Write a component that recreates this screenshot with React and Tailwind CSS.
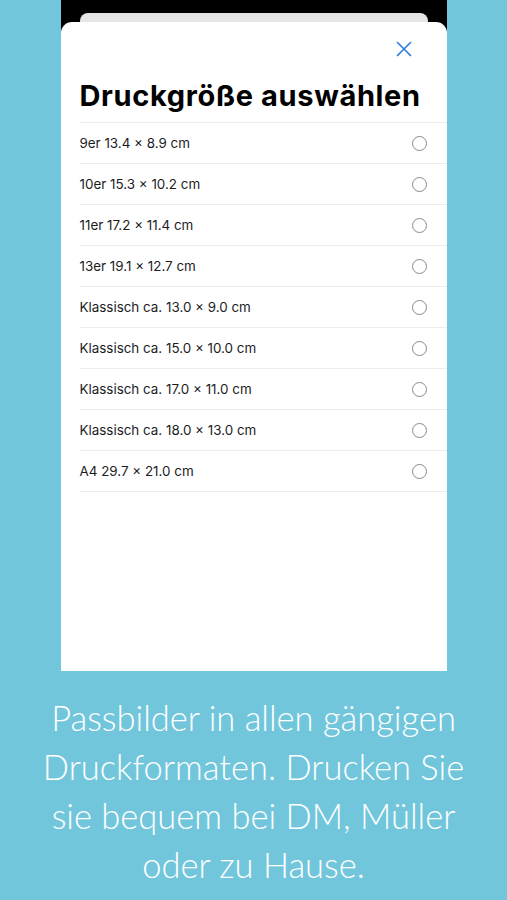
const sizes = [
  '9er 13.4 × 8.9 cm',
  '10er 15.3 × 10.2 cm',
  '11er 17.2 × 11.4 cm',
  '13er 19.1 × 12.7 cm',
  'Klassisch ca. 13.0 × 9.0 cm',
  'Klassisch ca. 15.0 × 10.0 cm',
  'Klassisch ca. 17.0 × 11.0 cm',
  'Klassisch ca. 18.0 × 13.0 cm',
  'A4 29.7 × 21.0 cm',
];

const SizeRow = ({ label }) => (
  <div className="h-[41px] flex items-center justify-between pr-[20px] border-b border-[#ececec]">
    <span className="text-[13.4px] text-[#1c1c1e] pt-[1px]">{label}</span>
    <span className="w-[15px] h-[15px] rounded-full border-[1.5px] border-[#8a8a8a]" />
  </div>
);

export default function App() {
  return (
    <div className="w-full h-[900px] bg-[#72c6dc] flex flex-col items-center" style={{ fontFamily: 'Inter, "Liberation Sans", sans-serif' }}>
      <div className="w-[386px] h-[671px] bg-black flex flex-col pt-[13px]">
        <div className="mx-[19px] h-[9px] rounded-t-[8px] bg-[#e6e6e6]" />
        <div className="flex-1 bg-white rounded-t-[11px] pl-[19px] flex flex-col">
          <div className="flex justify-end pr-[35px] pt-[19px]">
            <svg width="16" height="16" viewBox="0 0 16 16" fill="none" stroke="#2f80d8" strokeWidth="1.7" strokeLinecap="round">
              <path d="M1.5 1.5 L14.5 14.5 M14.5 1.5 L1.5 14.5" />
            </svg>
          </div>
          <h1 className="mt-[19px] text-[29px] leading-[40px] font-bold text-black tracking-[0.65px]">Druckgröße auswählen</h1>
          <div className="mt-[6px] border-t border-[#ececec]">
            {sizes.map((s) => (
              <SizeRow key={s} label={s} />
            ))}
          </div>
        </div>
      </div>
      <p
        className="mt-[22px] px-[20px] text-center text-white text-[34.5px] leading-[49px] font-light"
        style={{ fontFamily: 'Lato, "Open Sans", sans-serif' }}
      >
        Passbilder in allen gängigen Druckformaten. Drucken Sie sie bequem bei DM, Müller oder zu Hause.
      </p>
    </div>
  );
}
